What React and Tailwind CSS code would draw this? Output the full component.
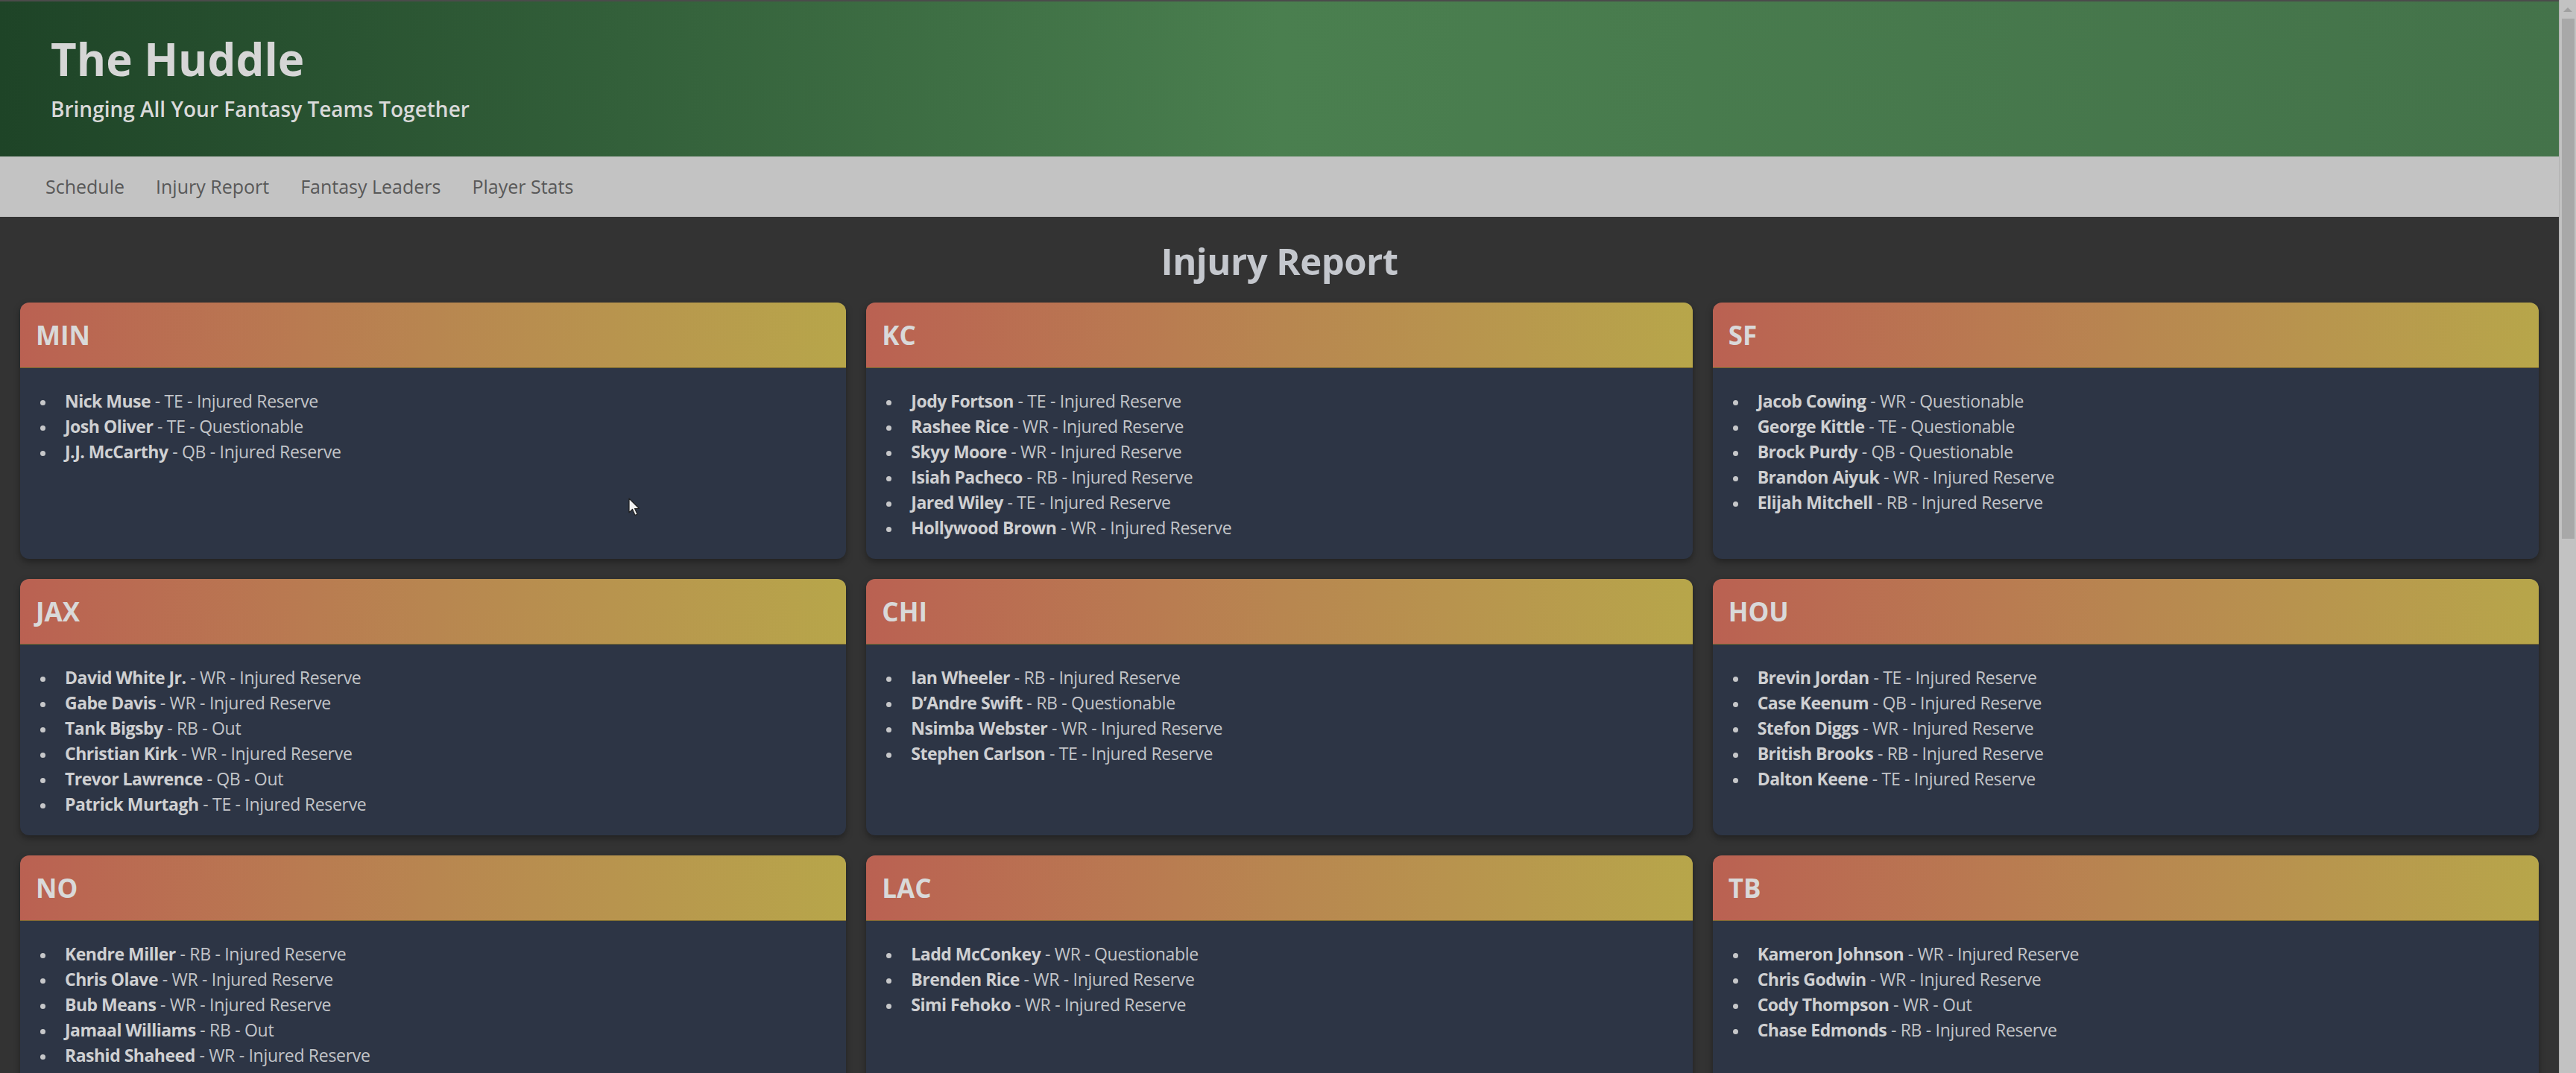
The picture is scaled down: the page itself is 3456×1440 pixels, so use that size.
const teams = [
  {
    code: "MIN",
    players: [
      ["Nick Muse", "TE", "Injured Reserve"],
      ["Josh Oliver", "TE", "Questionable"],
      ["J.J. McCarthy", "QB", "Injured Reserve"],
    ],
  },
  {
    code: "KC",
    players: [
      ["Jody Fortson", "TE", "Injured Reserve"],
      ["Rashee Rice", "WR", "Injured Reserve"],
      ["Skyy Moore", "WR", "Injured Reserve"],
      ["Isiah Pacheco", "RB", "Injured Reserve"],
      ["Jared Wiley", "TE", "Injured Reserve"],
      ["Hollywood Brown", "WR", "Injured Reserve"],
    ],
  },
  {
    code: "SF",
    players: [
      ["Jacob Cowing", "WR", "Questionable"],
      ["George Kittle", "TE", "Questionable"],
      ["Brock Purdy", "QB", "Questionable"],
      ["Brandon Aiyuk", "WR", "Injured Reserve"],
      ["Elijah Mitchell", "RB", "Injured Reserve"],
    ],
  },
  {
    code: "JAX",
    players: [
      ["David White Jr.", "WR", "Injured Reserve"],
      ["Gabe Davis", "WR", "Injured Reserve"],
      ["Tank Bigsby", "RB", "Out"],
      ["Christian Kirk", "WR", "Injured Reserve"],
      ["Trevor Lawrence", "QB", "Out"],
      ["Patrick Murtagh", "TE", "Injured Reserve"],
    ],
  },
  {
    code: "CHI",
    players: [
      ["Ian Wheeler", "RB", "Injured Reserve"],
      ["D’Andre Swift", "RB", "Questionable"],
      ["Nsimba Webster", "WR", "Injured Reserve"],
      ["Stephen Carlson", "TE", "Injured Reserve"],
    ],
  },
  {
    code: "HOU",
    players: [
      ["Brevin Jordan", "TE", "Injured Reserve"],
      ["Case Keenum", "QB", "Injured Reserve"],
      ["Stefon Diggs", "WR", "Injured Reserve"],
      ["British Brooks", "RB", "Injured Reserve"],
      ["Dalton Keene", "TE", "Injured Reserve"],
    ],
  },
  {
    code: "NO",
    players: [
      ["Kendre Miller", "RB", "Injured Reserve"],
      ["Chris Olave", "WR", "Injured Reserve"],
      ["Bub Means", "WR", "Injured Reserve"],
      ["Jamaal Williams", "RB", "Out"],
      ["Rashid Shaheed", "WR", "Injured Reserve"],
    ],
  },
  {
    code: "LAC",
    players: [
      ["Ladd McConkey", "WR", "Questionable"],
      ["Brenden Rice", "WR", "Injured Reserve"],
      ["Simi Fehoko", "WR", "Injured Reserve"],
    ],
  },
  {
    code: "TB",
    players: [
      ["Kameron Johnson", "WR", "Injured Reserve"],
      ["Chris Godwin", "WR", "Injured Reserve"],
      ["Cody Thompson", "WR", "Out"],
      ["Chase Edmonds", "RB", "Injured Reserve"],
    ],
  },
];

function TeamCard({ team }) {
  return (
    <div className="rounded-[12px] bg-[#2d3545] overflow-hidden shadow-[0_4px_10px_rgba(0,0,0,0.35)] flex flex-col">
      <div className="h-[88px] shrink-0 flex items-center px-[21px] bg-gradient-to-r from-[#ba6152] via-[#b88650] to-[#b7a64a] border-b border-[#7a6a30]">
        <h3 className="text-[35px] font-bold text-[#d9d9d9] leading-none">
          {team.code}
        </h3>
      </div>
      <ul className="pl-[27px] pr-[22px] pt-[27px] pb-[25px] text-[23px] leading-[34px] tracking-[-0.3px] text-[#c3c5c9]">
        {team.players.map(([name, pos, status]) => (
          <li key={name} className="flex items-center">
            <span className="w-[33px] shrink-0 flex">
              <span className="mt-[5px] w-[7px] h-[7px] rounded-full bg-[#c6c7c9]" />
            </span>
            <span>
              <span className="font-bold tracking-[-0.5px] text-[#cfd0d2]">
                {name}
              </span>{" "}
              - {pos} - {status}
            </span>
          </li>
        ))}
      </ul>
    </div>
  );
}

export default function App() {
  return (
    <div className="relative h-[1440px] w-full overflow-hidden flex bg-[#333333] font-['Open_Sans',sans-serif]">
      <div className="flex-1 min-w-0 flex flex-col">
        <header className="h-[210px] shrink-0 pl-[68px] pt-[47px] bg-gradient-to-r from-[#1e4427] via-[#4a7f4f] to-[#44734a] border-t-2 border-[#4b4b4b]">
          <h1 className="text-[60px] leading-[60px] font-bold text-[#d6d6d6]">
            The Huddle
          </h1>
          <p className="mt-[23px] text-[28px] leading-[28px] font-semibold text-[#d9d9d9]">
            Bringing All Your Fantasy Teams Together
          </p>
        </header>
        <nav className="h-[81px] shrink-0 bg-[#c3c3c3] flex items-center pl-[61px] gap-[42px] text-[25px] text-[#585858]">
          <a>Schedule</a>
          <a>Injury Report</a>
          <a>Fantasy Leaders</a>
          <a>Player Stats</a>
        </nav>
        <main className="px-[27px]">
          <h2 className="mt-[34px] mb-[30px] text-center text-[49px] leading-[51px] tracking-[-0.5px] font-bold text-[#c4c7cd]">
            Injury Report
          </h2>
          <div className="grid grid-cols-3 gap-[27px] auto-rows-[344px]">
            {teams.map((t) => (
              <TeamCard key={t.code} team={t} />
            ))}
          </div>
        </main>
      </div>
      <div className="w-[23px] shrink-0 bg-[#c2c2c2] flex flex-col items-center border-l border-[#b0b0b0]">
        <div className="h-[25px] flex items-center justify-center">
          <div className="w-0 h-0 border-l-[6px] border-r-[6px] border-b-[6px] border-l-transparent border-r-transparent border-b-[#a0a0a0]" />
        </div>
        <div className="w-[17px] h-[698px] bg-[#a8a8a8]" />
      </div>
      <svg
        className="absolute left-[843px] top-[668px]"
        width="16"
        height="26"
        viewBox="0 0 16 26"
      >
        <path
          d="M1 1 L1 20 L5.5 15.5 L9 23.5 L12 22 L8.6 14.5 L14.5 14.5 Z"
          fill="#f2f2f2"
          stroke="#222"
          strokeWidth="1.2"
          strokeLinejoin="round"
        />
      </svg>
    </div>
  );
}
